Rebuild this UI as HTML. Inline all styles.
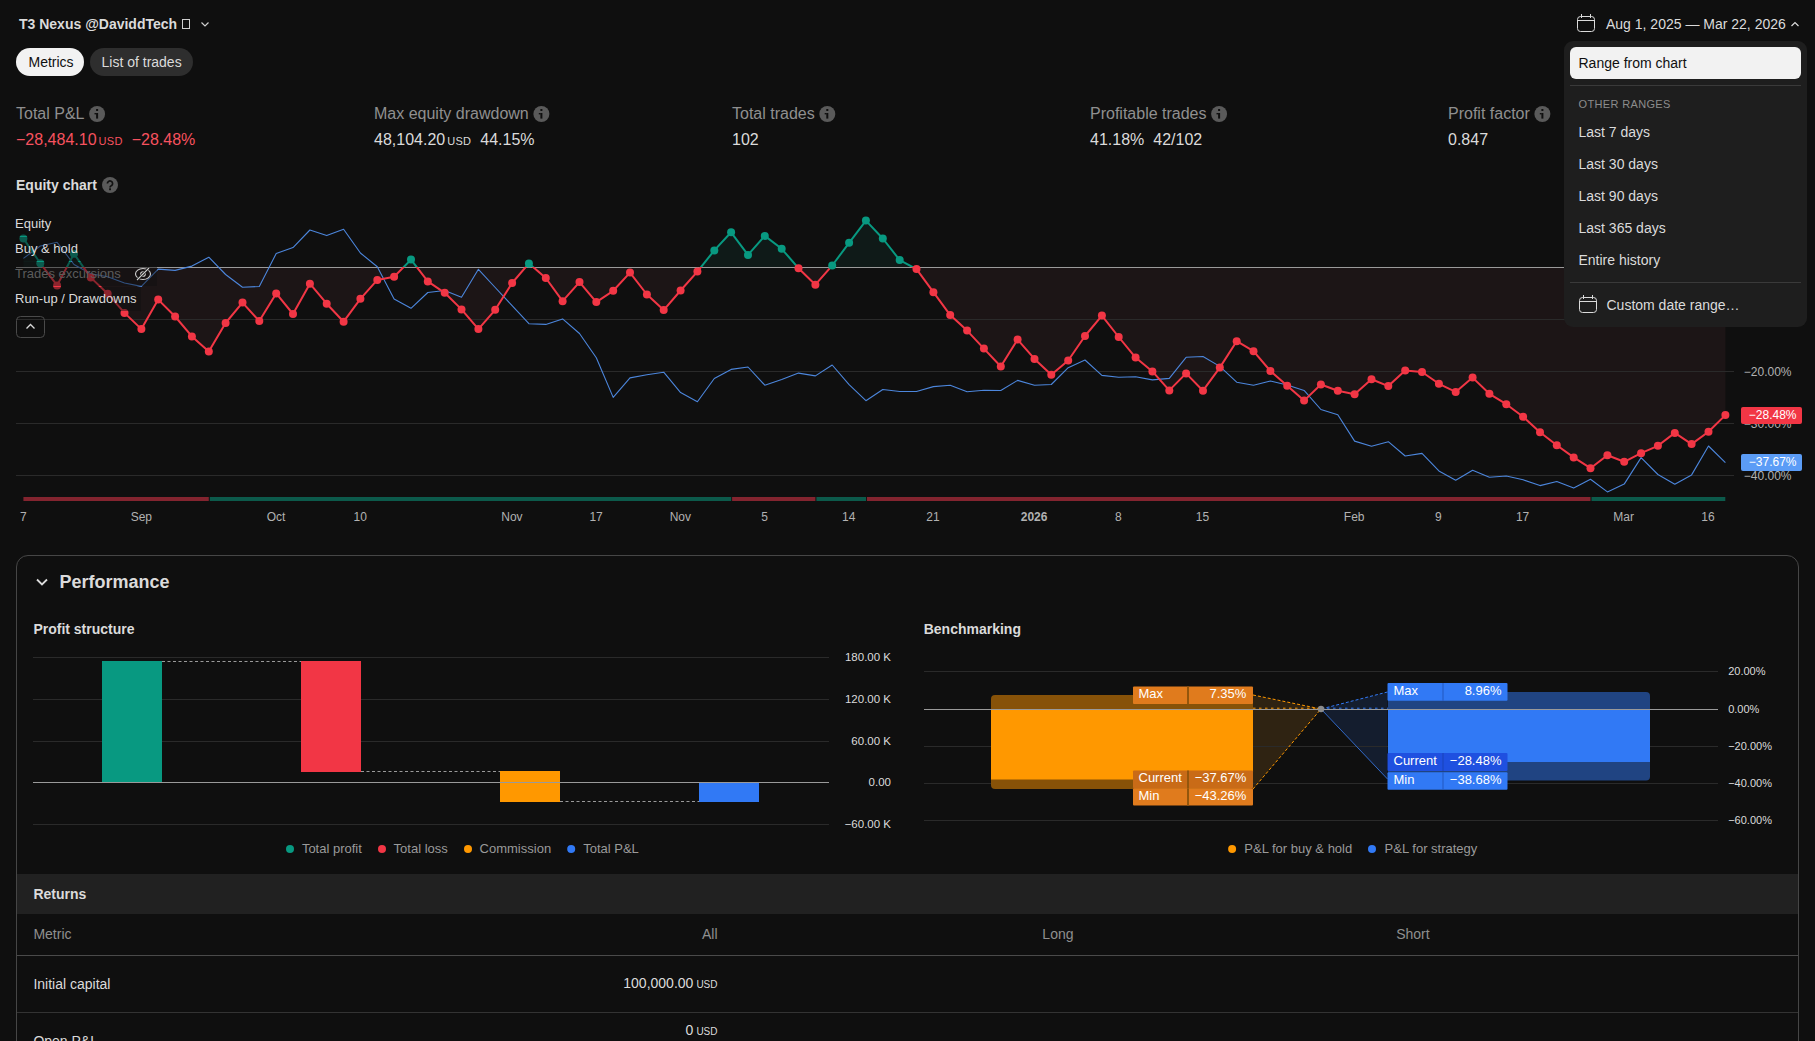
<!DOCTYPE html>
<html><head><meta charset="utf-8"><style>
html,body{margin:0;padding:0;background:#0f0f0f;width:1815px;height:1041px;overflow:hidden;font-family:"Liberation Sans", sans-serif}
.t{position:absolute;white-space:nowrap}
svg{position:absolute;left:0;top:0}
</style></head><body>
<div style="position:absolute;left:16px;top:555px;width:1781px;height:600px;border:1px solid #464646;border-radius:12px"></div><div style="position:absolute;left:17px;top:874px;width:1781px;height:40px;background:#212121"></div><div style="position:absolute;left:17px;top:955px;width:1781px;height:1px;background:#4a4a4a"></div><div style="position:absolute;left:17px;top:1012px;width:1781px;height:1px;background:#333333"></div>
<div style="position:absolute;left:16px;top:48px;width:68px;height:28px;border-radius:14px;background:#f2f2f2"></div><div style="position:absolute;left:90px;top:48px;width:103px;height:28px;border-radius:14px;background:#2e2e2e"></div>
<svg width="1815" height="1041" viewBox="0 0 1815 1041">
<rect x="182.5" y="19.5" width="7" height="9" fill="none" stroke="#cfcfcf" stroke-width="1"/><path d="M201.5 22.5 L205 26 L208.5 22.5" fill="none" stroke="#cfcfcf" stroke-width="1.2"/><rect x="1577.5" y="16.5" width="17" height="15" rx="3" fill="none" stroke="#dbdbdb" stroke-width="1"/><line x1="1577.5" y1="20.5" x2="1594.5" y2="20.5" stroke="#dbdbdb" stroke-width="1"/><line x1="1581.5" y1="14" x2="1581.5" y2="18" stroke="#dbdbdb" stroke-width="1"/><line x1="1590.5" y1="14" x2="1590.5" y2="18" stroke="#dbdbdb" stroke-width="1"/><path d="M1791.5 26 L1795 22.5 L1798.5 26" fill="none" stroke="#dbdbdb" stroke-width="1.2"/><circle cx="97.1" cy="114" r="8" fill="#5a5a5a"/><rect x="96.1" y="113" width="2" height="5.6" fill="#0f0f0f"/><rect x="94.5" y="113" width="1.8" height="1.4" fill="#0f0f0f"/><rect x="96.1" y="109" width="2" height="2" fill="#0f0f0f"/><circle cx="541.4" cy="114" r="8" fill="#5a5a5a"/><rect x="540.4" y="113" width="2" height="5.6" fill="#0f0f0f"/><rect x="538.8" y="113" width="1.8" height="1.4" fill="#0f0f0f"/><rect x="540.4" y="109" width="2" height="2" fill="#0f0f0f"/><circle cx="827.3" cy="114" r="8" fill="#5a5a5a"/><rect x="826.3" y="113" width="2" height="5.6" fill="#0f0f0f"/><rect x="824.7" y="113" width="1.8" height="1.4" fill="#0f0f0f"/><rect x="826.3" y="109" width="2" height="2" fill="#0f0f0f"/><circle cx="1219.1" cy="114" r="8" fill="#5a5a5a"/><rect x="1218.1" y="113" width="2" height="5.6" fill="#0f0f0f"/><rect x="1216.5" y="113" width="1.8" height="1.4" fill="#0f0f0f"/><rect x="1218.1" y="109" width="2" height="2" fill="#0f0f0f"/><circle cx="1542.4" cy="114" r="8" fill="#5a5a5a"/><rect x="1541.4" y="113" width="2" height="5.6" fill="#0f0f0f"/><rect x="1539.8" y="113" width="1.8" height="1.4" fill="#0f0f0f"/><rect x="1541.4" y="109" width="2" height="2" fill="#0f0f0f"/><circle cx="110" cy="185" r="8" fill="#5a5a5a"/><path d="M107.4 183.6 A2.6 2.6 0 1 1 111.6 185.6 Q110 186.4 110 187.6" stroke="#111" stroke-width="1.7" fill="none"/><rect x="109.1" y="188.3" width="1.9" height="1.9" fill="#111"/><defs><clipPath id="above"><rect x="0" y="0" width="1815" height="267"/></clipPath><clipPath id="below"><rect x="0" y="267" width="1815" height="400"/></clipPath></defs><path d="M23.4,267.0 L23.4,238.4 L40.3,263.3 L57.1,285.4 L74.0,253.8 L90.8,277.6 L107.7,293.7 L124.5,312.9 L141.4,329.1 L158.2,299.6 L175.1,316.5 L191.9,336.4 L208.8,351.4 L225.6,323.0 L242.5,302.6 L259.3,321.1 L276.2,293.4 L293.0,314.0 L309.9,283.7 L326.7,303.7 L343.6,321.7 L360.4,298.8 L377.3,279.9 L394.1,276.8 L411.0,259.6 L427.8,281.4 L444.7,292.8 L461.5,309.4 L478.4,329.1 L495.2,309.8 L512.1,283.0 L528.9,263.4 L545.8,278.0 L562.6,301.2 L579.5,282.1 L596.3,302.1 L613.2,290.8 L630.0,272.6 L646.9,294.5 L663.7,310.1 L680.6,290.5 L697.4,271.6 L714.3,250.4 L731.1,232.3 L748.0,254.9 L764.8,235.9 L781.7,248.8 L798.5,268.2 L815.4,284.7 L832.2,265.5 L849.1,242.8 L865.9,220.6 L882.8,238.5 L899.7,260.1 L916.5,269.1 L933.4,292.2 L950.2,315.1 L967.1,330.6 L983.9,348.6 L1000.8,366.5 L1017.6,339.6 L1034.5,358.9 L1051.3,374.7 L1068.2,360.5 L1085.0,336.0 L1101.9,315.6 L1118.7,337.0 L1135.6,357.6 L1152.4,371.4 L1169.3,390.4 L1186.1,373.4 L1203.0,390.7 L1219.8,367.6 L1236.7,341.2 L1253.5,351.2 L1270.4,371.0 L1287.2,385.7 L1304.1,400.6 L1320.9,384.5 L1337.8,390.8 L1354.6,394.2 L1371.5,379.2 L1388.3,386.1 L1405.2,370.4 L1422.0,372.0 L1438.9,383.8 L1455.7,391.9 L1472.6,377.6 L1489.4,393.8 L1506.3,404.2 L1523.1,416.8 L1540.0,432.2 L1556.8,445.2 L1573.7,457.4 L1590.5,468.2 L1607.4,455.2 L1624.2,461.8 L1641.1,453.2 L1657.9,445.8 L1674.8,432.9 L1691.6,444.1 L1708.5,431.8 L1725.4,415.1 L1725.4,267.0 Z" fill="#1c1516" clip-path="url(#below)"/><path d="M23.4,267.0 L23.4,238.4 L40.3,263.3 L57.1,285.4 L74.0,253.8 L90.8,277.6 L107.7,293.7 L124.5,312.9 L141.4,329.1 L158.2,299.6 L175.1,316.5 L191.9,336.4 L208.8,351.4 L225.6,323.0 L242.5,302.6 L259.3,321.1 L276.2,293.4 L293.0,314.0 L309.9,283.7 L326.7,303.7 L343.6,321.7 L360.4,298.8 L377.3,279.9 L394.1,276.8 L411.0,259.6 L427.8,281.4 L444.7,292.8 L461.5,309.4 L478.4,329.1 L495.2,309.8 L512.1,283.0 L528.9,263.4 L545.8,278.0 L562.6,301.2 L579.5,282.1 L596.3,302.1 L613.2,290.8 L630.0,272.6 L646.9,294.5 L663.7,310.1 L680.6,290.5 L697.4,271.6 L714.3,250.4 L731.1,232.3 L748.0,254.9 L764.8,235.9 L781.7,248.8 L798.5,268.2 L815.4,284.7 L832.2,265.5 L849.1,242.8 L865.9,220.6 L882.8,238.5 L899.7,260.1 L916.5,269.1 L933.4,292.2 L950.2,315.1 L967.1,330.6 L983.9,348.6 L1000.8,366.5 L1017.6,339.6 L1034.5,358.9 L1051.3,374.7 L1068.2,360.5 L1085.0,336.0 L1101.9,315.6 L1118.7,337.0 L1135.6,357.6 L1152.4,371.4 L1169.3,390.4 L1186.1,373.4 L1203.0,390.7 L1219.8,367.6 L1236.7,341.2 L1253.5,351.2 L1270.4,371.0 L1287.2,385.7 L1304.1,400.6 L1320.9,384.5 L1337.8,390.8 L1354.6,394.2 L1371.5,379.2 L1388.3,386.1 L1405.2,370.4 L1422.0,372.0 L1438.9,383.8 L1455.7,391.9 L1472.6,377.6 L1489.4,393.8 L1506.3,404.2 L1523.1,416.8 L1540.0,432.2 L1556.8,445.2 L1573.7,457.4 L1590.5,468.2 L1607.4,455.2 L1624.2,461.8 L1641.1,453.2 L1657.9,445.8 L1674.8,432.9 L1691.6,444.1 L1708.5,431.8 L1725.4,415.1 L1725.4,267.0 Z" fill="#0f1a18" clip-path="url(#above)"/><line x1="16" y1="319.5" x2="1734" y2="319.5" stroke="#2a2a2a" stroke-width="1"/><line x1="16" y1="371.5" x2="1734" y2="371.5" stroke="#2a2a2a" stroke-width="1"/><line x1="16" y1="423.5" x2="1734" y2="423.5" stroke="#2a2a2a" stroke-width="1"/><line x1="16" y1="475.5" x2="1734" y2="475.5" stroke="#2a2a2a" stroke-width="1"/><line x1="16" y1="267.5" x2="1734" y2="267.5" stroke="#9a9a9a" stroke-width="1"/><polyline points="23.4,258.4 40.3,246.0 57.1,242.3 74.0,264.5 90.8,273.8 107.7,276.8 124.5,283.0 141.4,286.4 158.2,269.1 175.1,270.4 191.9,266.1 208.8,257.2 225.6,274.5 242.5,287.3 259.3,286.5 276.2,253.5 293.0,247.6 309.9,230.0 326.7,235.6 343.6,229.2 360.4,253.0 377.3,266.8 394.1,299.1 411.0,308.3 427.8,292.5 444.7,290.5 461.5,297.3 478.4,269.3 495.2,287.5 512.1,305.6 528.9,323.7 545.8,324.4 562.6,318.9 579.5,333.5 596.3,357.8 613.2,397.4 630.0,377.9 646.9,374.8 663.7,372.2 680.6,392.6 697.4,401.7 714.3,378.5 731.1,369.4 748.0,367.0 764.8,385.2 781.7,379.5 798.5,373.1 815.4,375.9 832.2,365.0 849.1,384.6 865.9,400.7 882.8,389.5 899.7,391.5 916.5,391.5 933.4,386.6 950.2,385.3 967.1,391.8 983.9,390.2 1000.8,390.5 1017.6,380.4 1034.5,385.3 1051.3,384.5 1068.2,367.7 1085.0,360.0 1101.9,375.4 1118.7,377.2 1135.6,376.8 1152.4,379.9 1169.3,378.4 1186.1,357.3 1203.0,356.5 1219.8,366.4 1236.7,382.2 1253.5,385.3 1270.4,381.0 1287.2,385.0 1304.1,390.4 1320.9,409.5 1337.8,414.8 1354.6,441.1 1371.5,446.3 1388.3,441.7 1405.2,456.0 1422.0,453.4 1438.9,470.9 1455.7,480.3 1472.6,470.3 1489.4,477.2 1506.3,476.0 1523.1,479.8 1540.0,485.6 1556.8,481.5 1573.7,488.1 1590.5,479.3 1607.4,491.9 1624.2,484.1 1641.1,457.6 1657.9,474.5 1674.8,484.3 1691.6,474.9 1708.5,446.0 1725.4,462.7" fill="none" stroke="#4c86dc" stroke-width="1.1" stroke-linejoin="round"/><polyline points="23.4,238.4 40.3,263.3 57.1,285.4 74.0,253.8 90.8,277.6 107.7,293.7 124.5,312.9 141.4,329.1 158.2,299.6 175.1,316.5 191.9,336.4 208.8,351.4 225.6,323.0 242.5,302.6 259.3,321.1 276.2,293.4 293.0,314.0 309.9,283.7 326.7,303.7 343.6,321.7 360.4,298.8 377.3,279.9 394.1,276.8 411.0,259.6 427.8,281.4 444.7,292.8 461.5,309.4 478.4,329.1 495.2,309.8 512.1,283.0 528.9,263.4 545.8,278.0 562.6,301.2 579.5,282.1 596.3,302.1 613.2,290.8 630.0,272.6 646.9,294.5 663.7,310.1 680.6,290.5 697.4,271.6 714.3,250.4 731.1,232.3 748.0,254.9 764.8,235.9 781.7,248.8 798.5,268.2 815.4,284.7 832.2,265.5 849.1,242.8 865.9,220.6 882.8,238.5 899.7,260.1 916.5,269.1 933.4,292.2 950.2,315.1 967.1,330.6 983.9,348.6 1000.8,366.5 1017.6,339.6 1034.5,358.9 1051.3,374.7 1068.2,360.5 1085.0,336.0 1101.9,315.6 1118.7,337.0 1135.6,357.6 1152.4,371.4 1169.3,390.4 1186.1,373.4 1203.0,390.7 1219.8,367.6 1236.7,341.2 1253.5,351.2 1270.4,371.0 1287.2,385.7 1304.1,400.6 1320.9,384.5 1337.8,390.8 1354.6,394.2 1371.5,379.2 1388.3,386.1 1405.2,370.4 1422.0,372.0 1438.9,383.8 1455.7,391.9 1472.6,377.6 1489.4,393.8 1506.3,404.2 1523.1,416.8 1540.0,432.2 1556.8,445.2 1573.7,457.4 1590.5,468.2 1607.4,455.2 1624.2,461.8 1641.1,453.2 1657.9,445.8 1674.8,432.9 1691.6,444.1 1708.5,431.8 1725.4,415.1" fill="none" stroke="#f23645" stroke-width="2" clip-path="url(#below)" stroke-linejoin="round"/><polyline points="23.4,238.4 40.3,263.3 57.1,285.4 74.0,253.8 90.8,277.6 107.7,293.7 124.5,312.9 141.4,329.1 158.2,299.6 175.1,316.5 191.9,336.4 208.8,351.4 225.6,323.0 242.5,302.6 259.3,321.1 276.2,293.4 293.0,314.0 309.9,283.7 326.7,303.7 343.6,321.7 360.4,298.8 377.3,279.9 394.1,276.8 411.0,259.6 427.8,281.4 444.7,292.8 461.5,309.4 478.4,329.1 495.2,309.8 512.1,283.0 528.9,263.4 545.8,278.0 562.6,301.2 579.5,282.1 596.3,302.1 613.2,290.8 630.0,272.6 646.9,294.5 663.7,310.1 680.6,290.5 697.4,271.6 714.3,250.4 731.1,232.3 748.0,254.9 764.8,235.9 781.7,248.8 798.5,268.2 815.4,284.7 832.2,265.5 849.1,242.8 865.9,220.6 882.8,238.5 899.7,260.1 916.5,269.1 933.4,292.2 950.2,315.1 967.1,330.6 983.9,348.6 1000.8,366.5 1017.6,339.6 1034.5,358.9 1051.3,374.7 1068.2,360.5 1085.0,336.0 1101.9,315.6 1118.7,337.0 1135.6,357.6 1152.4,371.4 1169.3,390.4 1186.1,373.4 1203.0,390.7 1219.8,367.6 1236.7,341.2 1253.5,351.2 1270.4,371.0 1287.2,385.7 1304.1,400.6 1320.9,384.5 1337.8,390.8 1354.6,394.2 1371.5,379.2 1388.3,386.1 1405.2,370.4 1422.0,372.0 1438.9,383.8 1455.7,391.9 1472.6,377.6 1489.4,393.8 1506.3,404.2 1523.1,416.8 1540.0,432.2 1556.8,445.2 1573.7,457.4 1590.5,468.2 1607.4,455.2 1624.2,461.8 1641.1,453.2 1657.9,445.8 1674.8,432.9 1691.6,444.1 1708.5,431.8 1725.4,415.1" fill="none" stroke="#089981" stroke-width="2" clip-path="url(#above)" stroke-linejoin="round"/><circle cx="23.4" cy="238.4" r="4" fill="#089981"/><circle cx="40.3" cy="263.3" r="4" fill="#089981"/><circle cx="57.1" cy="285.4" r="4" fill="#f23645"/><circle cx="74.0" cy="253.8" r="4" fill="#089981"/><circle cx="90.8" cy="277.6" r="4" fill="#f23645"/><circle cx="107.7" cy="293.7" r="4" fill="#f23645"/><circle cx="124.5" cy="312.9" r="4" fill="#f23645"/><circle cx="141.4" cy="329.1" r="4" fill="#f23645"/><circle cx="158.2" cy="299.6" r="4" fill="#f23645"/><circle cx="175.1" cy="316.5" r="4" fill="#f23645"/><circle cx="191.9" cy="336.4" r="4" fill="#f23645"/><circle cx="208.8" cy="351.4" r="4" fill="#f23645"/><circle cx="225.6" cy="323.0" r="4" fill="#f23645"/><circle cx="242.5" cy="302.6" r="4" fill="#f23645"/><circle cx="259.3" cy="321.1" r="4" fill="#f23645"/><circle cx="276.2" cy="293.4" r="4" fill="#f23645"/><circle cx="293.0" cy="314.0" r="4" fill="#f23645"/><circle cx="309.9" cy="283.7" r="4" fill="#f23645"/><circle cx="326.7" cy="303.7" r="4" fill="#f23645"/><circle cx="343.6" cy="321.7" r="4" fill="#f23645"/><circle cx="360.4" cy="298.8" r="4" fill="#f23645"/><circle cx="377.3" cy="279.9" r="4" fill="#f23645"/><circle cx="394.1" cy="276.8" r="4" fill="#f23645"/><circle cx="411.0" cy="259.6" r="4" fill="#089981"/><circle cx="427.8" cy="281.4" r="4" fill="#f23645"/><circle cx="444.7" cy="292.8" r="4" fill="#f23645"/><circle cx="461.5" cy="309.4" r="4" fill="#f23645"/><circle cx="478.4" cy="329.1" r="4" fill="#f23645"/><circle cx="495.2" cy="309.8" r="4" fill="#f23645"/><circle cx="512.1" cy="283.0" r="4" fill="#f23645"/><circle cx="528.9" cy="263.4" r="4" fill="#089981"/><circle cx="545.8" cy="278.0" r="4" fill="#f23645"/><circle cx="562.6" cy="301.2" r="4" fill="#f23645"/><circle cx="579.5" cy="282.1" r="4" fill="#f23645"/><circle cx="596.3" cy="302.1" r="4" fill="#f23645"/><circle cx="613.2" cy="290.8" r="4" fill="#f23645"/><circle cx="630.0" cy="272.6" r="4" fill="#f23645"/><circle cx="646.9" cy="294.5" r="4" fill="#f23645"/><circle cx="663.7" cy="310.1" r="4" fill="#f23645"/><circle cx="680.6" cy="290.5" r="4" fill="#f23645"/><circle cx="697.4" cy="271.6" r="4" fill="#f23645"/><circle cx="714.3" cy="250.4" r="4" fill="#089981"/><circle cx="731.1" cy="232.3" r="4" fill="#089981"/><circle cx="748.0" cy="254.9" r="4" fill="#089981"/><circle cx="764.8" cy="235.9" r="4" fill="#089981"/><circle cx="781.7" cy="248.8" r="4" fill="#089981"/><circle cx="798.5" cy="268.2" r="4" fill="#f23645"/><circle cx="815.4" cy="284.7" r="4" fill="#f23645"/><circle cx="832.2" cy="265.5" r="4" fill="#089981"/><circle cx="849.1" cy="242.8" r="4" fill="#089981"/><circle cx="865.9" cy="220.6" r="4" fill="#089981"/><circle cx="882.8" cy="238.5" r="4" fill="#089981"/><circle cx="899.7" cy="260.1" r="4" fill="#089981"/><circle cx="916.5" cy="269.1" r="4" fill="#f23645"/><circle cx="933.4" cy="292.2" r="4" fill="#f23645"/><circle cx="950.2" cy="315.1" r="4" fill="#f23645"/><circle cx="967.1" cy="330.6" r="4" fill="#f23645"/><circle cx="983.9" cy="348.6" r="4" fill="#f23645"/><circle cx="1000.8" cy="366.5" r="4" fill="#f23645"/><circle cx="1017.6" cy="339.6" r="4" fill="#f23645"/><circle cx="1034.5" cy="358.9" r="4" fill="#f23645"/><circle cx="1051.3" cy="374.7" r="4" fill="#f23645"/><circle cx="1068.2" cy="360.5" r="4" fill="#f23645"/><circle cx="1085.0" cy="336.0" r="4" fill="#f23645"/><circle cx="1101.9" cy="315.6" r="4" fill="#f23645"/><circle cx="1118.7" cy="337.0" r="4" fill="#f23645"/><circle cx="1135.6" cy="357.6" r="4" fill="#f23645"/><circle cx="1152.4" cy="371.4" r="4" fill="#f23645"/><circle cx="1169.3" cy="390.4" r="4" fill="#f23645"/><circle cx="1186.1" cy="373.4" r="4" fill="#f23645"/><circle cx="1203.0" cy="390.7" r="4" fill="#f23645"/><circle cx="1219.8" cy="367.6" r="4" fill="#f23645"/><circle cx="1236.7" cy="341.2" r="4" fill="#f23645"/><circle cx="1253.5" cy="351.2" r="4" fill="#f23645"/><circle cx="1270.4" cy="371.0" r="4" fill="#f23645"/><circle cx="1287.2" cy="385.7" r="4" fill="#f23645"/><circle cx="1304.1" cy="400.6" r="4" fill="#f23645"/><circle cx="1320.9" cy="384.5" r="4" fill="#f23645"/><circle cx="1337.8" cy="390.8" r="4" fill="#f23645"/><circle cx="1354.6" cy="394.2" r="4" fill="#f23645"/><circle cx="1371.5" cy="379.2" r="4" fill="#f23645"/><circle cx="1388.3" cy="386.1" r="4" fill="#f23645"/><circle cx="1405.2" cy="370.4" r="4" fill="#f23645"/><circle cx="1422.0" cy="372.0" r="4" fill="#f23645"/><circle cx="1438.9" cy="383.8" r="4" fill="#f23645"/><circle cx="1455.7" cy="391.9" r="4" fill="#f23645"/><circle cx="1472.6" cy="377.6" r="4" fill="#f23645"/><circle cx="1489.4" cy="393.8" r="4" fill="#f23645"/><circle cx="1506.3" cy="404.2" r="4" fill="#f23645"/><circle cx="1523.1" cy="416.8" r="4" fill="#f23645"/><circle cx="1540.0" cy="432.2" r="4" fill="#f23645"/><circle cx="1556.8" cy="445.2" r="4" fill="#f23645"/><circle cx="1573.7" cy="457.4" r="4" fill="#f23645"/><circle cx="1590.5" cy="468.2" r="4" fill="#f23645"/><circle cx="1607.4" cy="455.2" r="4" fill="#f23645"/><circle cx="1624.2" cy="461.8" r="4" fill="#f23645"/><circle cx="1641.1" cy="453.2" r="4" fill="#f23645"/><circle cx="1657.9" cy="445.8" r="4" fill="#f23645"/><circle cx="1674.8" cy="432.9" r="4" fill="#f23645"/><circle cx="1691.6" cy="444.1" r="4" fill="#f23645"/><circle cx="1708.5" cy="431.8" r="4" fill="#f23645"/><circle cx="1725.4" cy="415.1" r="4" fill="#f23645"/><rect x="23.4" y="497" width="185.4" height="4" fill="#83242f"/><rect x="209.8" y="497" width="521.4" height="4" fill="#0c5a4b"/><rect x="732.1" y="497" width="83.3" height="4" fill="#83242f"/><rect x="816.4" y="497" width="49.6" height="4" fill="#0c5a4b"/><rect x="866.9" y="497" width="723.6" height="4" fill="#83242f"/><rect x="1591.5" y="497" width="133.8" height="4" fill="#0c5a4b"/><path d="M37 579.5 L42 584.5 L47 579.5" fill="none" stroke="#dbdbdb" stroke-width="1.8"/><line x1="33" y1="657.5" x2="829" y2="657.5" stroke="#2a2a2a" stroke-width="1"/><line x1="33" y1="699.5" x2="829" y2="699.5" stroke="#2a2a2a" stroke-width="1"/><line x1="33" y1="741.5" x2="829" y2="741.5" stroke="#2a2a2a" stroke-width="1"/><line x1="33" y1="824.5" x2="829" y2="824.5" stroke="#2a2a2a" stroke-width="1"/><rect x="102" y="661" width="60" height="121.5" fill="#089981"/><rect x="301" y="661" width="60" height="111" fill="#f23645"/><rect x="500" y="771" width="60" height="31" fill="#ff9800"/><rect x="699" y="782.5" width="60" height="19.5" fill="#3179f5"/><line x1="33" y1="782.5" x2="829" y2="782.5" stroke="#9a9a9a" stroke-width="1"/><line x1="162" y1="661.5" x2="301" y2="661.5" stroke="#9a9a9a" stroke-width="1" stroke-dasharray="3 2.5"/><line x1="361" y1="771.5" x2="500" y2="771.5" stroke="#9a9a9a" stroke-width="1" stroke-dasharray="3 2.5"/><line x1="560" y1="801.5" x2="699" y2="801.5" stroke="#9a9a9a" stroke-width="1" stroke-dasharray="3 2.5"/><circle cx="290" cy="849" r="4" fill="#089981"/><circle cx="382" cy="849" r="4" fill="#f23645"/><circle cx="468" cy="849" r="4" fill="#ff9800"/><circle cx="571.2" cy="849" r="4" fill="#3179f5"/><path d="M1253,695 L1321,709 L1253,789 Z" fill="#2f2312"/><path d="M1387.5,692 L1321,709 L1387.5,779.5 Z" fill="#141d2e"/><line x1="924" y1="671.5" x2="1718" y2="671.5" stroke="#2a2a2a" stroke-width="1"/><line x1="924" y1="746.5" x2="1718" y2="746.5" stroke="#2a2a2a" stroke-width="1"/><line x1="924" y1="783.5" x2="1718" y2="783.5" stroke="#2a2a2a" stroke-width="1"/><line x1="924" y1="820.5" x2="1718" y2="820.5" stroke="#2a2a2a" stroke-width="1"/><rect x="991" y="695" width="262" height="94" rx="4" fill="#875208"/><rect x="991" y="709" width="262" height="70.5" fill="#ff9800"/><line x1="1253" y1="695" x2="1321" y2="709" stroke="#ff9800" stroke-width="1" stroke-dasharray="3 2"/><line x1="1253" y1="789" x2="1321" y2="709" stroke="#ff9800" stroke-width="1" stroke-dasharray="3 2"/><rect x="1388" y="692" width="262" height="88.5" rx="4" fill="#204482"/><rect x="1388" y="709" width="262" height="53" fill="#3179f5"/><line x1="1387.5" y1="692" x2="1321" y2="709" stroke="#3179f5" stroke-width="1" stroke-dasharray="3 2"/><line x1="1387.5" y1="779" x2="1321" y2="709" stroke="#3a7ef0" stroke-width="0.8"/><line x1="924" y1="709.5" x2="1718" y2="709.5" stroke="#9a9a9a" stroke-width="1"/><line x1="1253" y1="708.2" x2="1321" y2="708.2" stroke="#ff9800" stroke-width="1" stroke-dasharray="2.5 3.5"/><line x1="1321" y1="708.2" x2="1388" y2="708.2" stroke="#3179f5" stroke-width="1" stroke-dasharray="2.5 3.5"/><circle cx="1321" cy="709" r="3.2" fill="#8c8c8c"/><rect x="1133" y="686.5" width="120" height="17.5" rx="1" fill="#e07b1d"/><rect x="1187" y="686.5" width="2" height="17.5" fill="#93560c"/><rect x="1133" y="770.5" width="120" height="17.8" rx="1" fill="#c96b17"/><rect x="1187" y="770.5" width="2" height="17.8" fill="#93560c"/><rect x="1133" y="788.3" width="120" height="17.3" rx="1" fill="#e07b1d"/><rect x="1187" y="788.3" width="2" height="17.3" fill="#93560c"/><rect x="1387.5" y="683" width="120" height="17.8" rx="1" fill="#3179f5"/><rect x="1442.5" y="683" width="1" height="17.8" fill="#2358c0"/><rect x="1387.5" y="753" width="120" height="18" rx="1" fill="#1f50e0"/><rect x="1442.5" y="753" width="1" height="18" fill="#1a43b8"/><rect x="1387.5" y="772.2" width="120" height="17.6" rx="1" fill="#3179f5"/><rect x="1442.5" y="772.2" width="1" height="17.6" fill="#2358c0"/><circle cx="1232.1" cy="849" r="4" fill="#ff9800"/><circle cx="1372" cy="849" r="4" fill="#3179f5"/>
</svg>
<div style="position:absolute;left:11px;top:212px;width:48px;height:24px;background:rgba(15,15,15,0.45)"></div><div style="position:absolute;left:11px;top:237px;width:73px;height:24px;background:rgba(15,15,15,0.45)"></div><div style="position:absolute;left:11px;top:262px;width:146px;height:24px;background:rgba(15,15,15,0.45)"></div><div style="position:absolute;left:11px;top:287px;width:130px;height:24px;background:rgba(15,15,15,0.45)"></div>
<svg width="1815" height="1041" viewBox="0 0 1815 1041"><ellipse cx="143" cy="274" rx="7.5" ry="5.5" fill="none" stroke="#cfcfcf" stroke-width="1.1"/><circle cx="143" cy="274" r="2.3" fill="none" stroke="#cfcfcf" stroke-width="1.1"/><line x1="137" y1="280" x2="149" y2="268" stroke="#0f0f0f" stroke-width="2.5"/><line x1="137" y1="280" x2="149" y2="268" stroke="#cfcfcf" stroke-width="1.1"/><rect x="16.5" y="316.5" width="28" height="21" rx="4" fill="none" stroke="#4a4a4a" stroke-width="1"/><path d="M26.5 328.5 L30.5 324.5 L34.5 328.5" fill="none" stroke="#dbdbdb" stroke-width="1.3"/></svg>
<div class="t" style="left:19px;top:17.25px;font-size:14px;line-height:14px;font-weight:700;color:#dbdbdb;">T3 Nexus @DaviddTech</div><div class="t" style="left:28.5px;top:54.85px;font-size:14px;line-height:14px;font-weight:400;color:#0f0f0f;">Metrics</div><div class="t" style="left:101.5px;top:54.85px;font-size:14px;line-height:14px;font-weight:400;color:#dbdbdb;">List of trades</div><div class="t" style="left:1606px;top:17.25px;font-size:14px;line-height:14px;font-weight:400;color:#dbdbdb;">Aug 1, 2025 — Mar 22, 2026</div><div class="t" style="left:16px;top:105.76px;font-size:16px;line-height:16px;font-weight:400;color:#8f8f8f;">Total P&amp;L</div><div class="t" style="left:374px;top:105.76px;font-size:16px;line-height:16px;font-weight:400;color:#8f8f8f;">Max equity drawdown</div><div class="t" style="left:732px;top:105.76px;font-size:16px;line-height:16px;font-weight:400;color:#8f8f8f;">Total trades</div><div class="t" style="left:1090px;top:105.76px;font-size:16px;line-height:16px;font-weight:400;color:#8f8f8f;">Profitable trades</div><div class="t" style="left:1448px;top:105.76px;font-size:16px;line-height:16px;font-weight:400;color:#8f8f8f;">Profit factor</div><div class="t" style="left:16px;top:132.46px;font-size:16px;line-height:16px;font-weight:400;color:#f7525f;">−28,484.10<span style="font-size:11px;margin-left:2px;letter-spacing:0.3px">USD</span><span style="margin-left:9px">−28.48%</span></div><div class="t" style="left:374px;top:132.46px;font-size:16px;line-height:16px;font-weight:400;color:#dbdbdb;">48,104.20<span style="font-size:11px;margin-left:2px;letter-spacing:0.3px">USD</span><span style="margin-left:9px">44.15%</span></div><div class="t" style="left:732px;top:132.46px;font-size:16px;line-height:16px;font-weight:400;color:#dbdbdb;">102</div><div class="t" style="left:1090px;top:132.46px;font-size:16px;line-height:16px;font-weight:400;color:#dbdbdb;">41.18%<span style="margin-left:9px">42/102</span></div><div class="t" style="left:1448px;top:132.46px;font-size:16px;line-height:16px;font-weight:400;color:#dbdbdb;">0.847</div><div class="t" style="left:16px;top:178.35px;font-size:14px;line-height:14px;font-weight:700;color:#dbdbdb;">Equity chart</div><div class="t" style="left:-276.6px;width:600px;text-align:center;top:510.84px;font-size:12px;line-height:12px;font-weight:400;color:#b2b2b2;">7</div><div class="t" style="left:-158.685px;width:600px;text-align:center;top:510.84px;font-size:12px;line-height:12px;font-weight:400;color:#b2b2b2;">Sep</div><div class="t" style="left:-23.92500000000001px;width:600px;text-align:center;top:510.84px;font-size:12px;line-height:12px;font-weight:400;color:#b2b2b2;">Oct</div><div class="t" style="left:60.299999999999955px;width:600px;text-align:center;top:510.84px;font-size:12px;line-height:12px;font-weight:400;color:#b2b2b2;">10</div><div class="t" style="left:211.90499999999997px;width:600px;text-align:center;top:510.84px;font-size:12px;line-height:12px;font-weight:400;color:#b2b2b2;">Nov</div><div class="t" style="left:296.13px;width:600px;text-align:center;top:510.84px;font-size:12px;line-height:12px;font-weight:400;color:#b2b2b2;">17</div><div class="t" style="left:380.3549999999999px;width:600px;text-align:center;top:510.84px;font-size:12px;line-height:12px;font-weight:400;color:#b2b2b2;">Nov</div><div class="t" style="left:464.5799999999999px;width:600px;text-align:center;top:510.84px;font-size:12px;line-height:12px;font-weight:400;color:#b2b2b2;">5</div><div class="t" style="left:548.805px;width:600px;text-align:center;top:510.84px;font-size:12px;line-height:12px;font-weight:400;color:#b2b2b2;">14</div><div class="t" style="left:633.03px;width:600px;text-align:center;top:510.84px;font-size:12px;line-height:12px;font-weight:400;color:#b2b2b2;">21</div><div class="t" style="left:734.1000000000001px;width:600px;text-align:center;top:510.84px;font-size:12px;line-height:12px;font-weight:700;color:#b2b2b2;">2026</div><div class="t" style="left:818.325px;width:600px;text-align:center;top:510.84px;font-size:12px;line-height:12px;font-weight:400;color:#b2b2b2;">8</div><div class="t" style="left:902.55px;width:600px;text-align:center;top:510.84px;font-size:12px;line-height:12px;font-weight:400;color:#b2b2b2;">15</div><div class="t" style="left:1054.155px;width:600px;text-align:center;top:510.84px;font-size:12px;line-height:12px;font-weight:400;color:#b2b2b2;">Feb</div><div class="t" style="left:1138.38px;width:600px;text-align:center;top:510.84px;font-size:12px;line-height:12px;font-weight:400;color:#b2b2b2;">9</div><div class="t" style="left:1222.605px;width:600px;text-align:center;top:510.84px;font-size:12px;line-height:12px;font-weight:400;color:#b2b2b2;">17</div><div class="t" style="left:1323.675px;width:600px;text-align:center;top:510.84px;font-size:12px;line-height:12px;font-weight:400;color:#b2b2b2;">Mar</div><div class="t" style="left:1407.9px;width:600px;text-align:center;top:510.84px;font-size:12px;line-height:12px;font-weight:400;color:#b2b2b2;">16</div><div class="t" style="right:23.5px;top:366.04px;font-size:12px;line-height:12px;font-weight:400;color:#b2b2b2;">−20.00%</div><div class="t" style="right:23.5px;top:418.04px;font-size:12px;line-height:12px;font-weight:400;color:#b2b2b2;">−30.00%</div><div class="t" style="right:23.5px;top:470.04px;font-size:12px;line-height:12px;font-weight:400;color:#b2b2b2;">−40.00%</div><div class="t" style="right:23.5px;top:314.04px;font-size:12px;line-height:12px;font-weight:400;color:#b2b2b2;">−10.00%</div><div class="t" style="right:23.5px;top:262.04px;font-size:12px;line-height:12px;font-weight:400;color:#b2b2b2;">0.00%</div><div class="t" style="right:23.5px;top:210.04px;font-size:12px;line-height:12px;font-weight:400;color:#b2b2b2;">10.00%</div><div class="t" style="left:15px;top:216.50px;font-size:13px;line-height:13px;font-weight:400;color:#dbdbdb;">Equity</div><div class="t" style="left:15px;top:241.50px;font-size:13px;line-height:13px;font-weight:400;color:#dbdbdb;">Buy &amp; hold</div><div class="t" style="left:15px;top:266.50px;font-size:13px;line-height:13px;font-weight:400;color:#5c5c5c;">Trades excursions</div><div class="t" style="left:15px;top:291.50px;font-size:13px;line-height:13px;font-weight:400;color:#dbdbdb;">Run-up / Drawdowns</div><div class="t" style="left:59.4px;top:572.66px;font-size:18px;line-height:18px;font-weight:700;color:#dbdbdb;">Performance</div><div class="t" style="left:33.4px;top:621.95px;font-size:14px;line-height:14px;font-weight:700;color:#dbdbdb;">Profit structure</div><div class="t" style="left:923.7px;top:622.15px;font-size:14px;line-height:14px;font-weight:700;color:#dbdbdb;">Benchmarking</div><div class="t" style="right:924px;top:652.47px;font-size:11.5px;line-height:11.5px;font-weight:400;color:#dbdbdb;">180.00 K</div><div class="t" style="right:924px;top:694.47px;font-size:11.5px;line-height:11.5px;font-weight:400;color:#dbdbdb;">120.00 K</div><div class="t" style="right:924px;top:736.47px;font-size:11.5px;line-height:11.5px;font-weight:400;color:#dbdbdb;">60.00 K</div><div class="t" style="right:924px;top:819.47px;font-size:11.5px;line-height:11.5px;font-weight:400;color:#dbdbdb;">−60.00 K</div><div class="t" style="right:924px;top:777.47px;font-size:11.5px;line-height:11.5px;font-weight:400;color:#dbdbdb;">0.00</div><div class="t" style="left:301.9px;top:842.00px;font-size:13px;line-height:13px;font-weight:400;color:#9a9a9a;">Total profit</div><div class="t" style="left:393.6px;top:842.00px;font-size:13px;line-height:13px;font-weight:400;color:#9a9a9a;">Total loss</div><div class="t" style="left:479.6px;top:842.00px;font-size:13px;line-height:13px;font-weight:400;color:#9a9a9a;">Commission</div><div class="t" style="left:583.2px;top:842.00px;font-size:13px;line-height:13px;font-weight:400;color:#9a9a9a;">Total P&amp;L</div><div class="t" style="left:1728.2px;top:665.99px;font-size:11px;line-height:11px;font-weight:400;color:#dbdbdb;">20.00%</div><div class="t" style="left:1728.2px;top:740.99px;font-size:11px;line-height:11px;font-weight:400;color:#dbdbdb;">−20.00%</div><div class="t" style="left:1728.2px;top:777.99px;font-size:11px;line-height:11px;font-weight:400;color:#dbdbdb;">−40.00%</div><div class="t" style="left:1728.2px;top:814.99px;font-size:11px;line-height:11px;font-weight:400;color:#dbdbdb;">−60.00%</div><div class="t" style="left:1728.2px;top:704.19px;font-size:11px;line-height:11px;font-weight:400;color:#dbdbdb;">0.00%</div><div class="t" style="left:1138.5px;top:687.20px;font-size:13px;line-height:13px;font-weight:400;color:#ffffff;">Max</div><div class="t" style="right:568.7px;top:687.20px;font-size:13px;line-height:13px;font-weight:400;color:#ffffff;">7.35%</div><div class="t" style="left:1138.5px;top:771.20px;font-size:13px;line-height:13px;font-weight:400;color:#ffffff;">Current</div><div class="t" style="right:568.7px;top:771.20px;font-size:13px;line-height:13px;font-weight:400;color:#ffffff;">−37.67%</div><div class="t" style="left:1138.5px;top:789.00px;font-size:13px;line-height:13px;font-weight:400;color:#ffffff;">Min</div><div class="t" style="right:568.7px;top:789.00px;font-size:13px;line-height:13px;font-weight:400;color:#ffffff;">−43.26%</div><div class="t" style="left:1393.5px;top:683.70px;font-size:13px;line-height:13px;font-weight:400;color:#ffffff;">Max</div><div class="t" style="right:313.5px;top:683.70px;font-size:13px;line-height:13px;font-weight:400;color:#ffffff;">8.96%</div><div class="t" style="left:1393.5px;top:753.70px;font-size:13px;line-height:13px;font-weight:400;color:#ffffff;">Current</div><div class="t" style="right:313.5px;top:753.70px;font-size:13px;line-height:13px;font-weight:400;color:#ffffff;">−28.48%</div><div class="t" style="left:1393.5px;top:772.90px;font-size:13px;line-height:13px;font-weight:400;color:#ffffff;">Min</div><div class="t" style="right:313.5px;top:772.90px;font-size:13px;line-height:13px;font-weight:400;color:#ffffff;">−38.68%</div><div class="t" style="left:1244.3px;top:842.00px;font-size:13px;line-height:13px;font-weight:400;color:#9a9a9a;">P&amp;L for buy &amp; hold</div><div class="t" style="left:1384.6px;top:842.00px;font-size:13px;line-height:13px;font-weight:400;color:#9a9a9a;">P&amp;L for strategy</div><div class="t" style="left:33.4px;top:887.25px;font-size:14px;line-height:14px;font-weight:700;color:#dbdbdb;">Returns</div><div class="t" style="left:33.4px;top:927.25px;font-size:14px;line-height:14px;font-weight:400;color:#8f8f8f;">Metric</div><div class="t" style="right:1097.5px;top:927.25px;font-size:14px;line-height:14px;font-weight:400;color:#8f8f8f;">All</div><div class="t" style="right:741.5px;top:927.25px;font-size:14px;line-height:14px;font-weight:400;color:#8f8f8f;">Long</div><div class="t" style="right:385.4000000000001px;top:927.25px;font-size:14px;line-height:14px;font-weight:400;color:#8f8f8f;">Short</div><div class="t" style="left:33.4px;top:977.15px;font-size:14px;line-height:14px;font-weight:400;color:#dbdbdb;">Initial capital</div><div class="t" style="right:1097.5px;top:975.85px;font-size:14px;line-height:14px;font-weight:400;color:#dbdbdb;">100,000.00<span style="font-size:10px;margin-left:3px">USD</span></div><div class="t" style="left:33.4px;top:1034.15px;font-size:14px;line-height:14px;font-weight:400;color:#dbdbdb;">Open P&amp;L</div><div class="t" style="right:1097.5px;top:1023.15px;font-size:14px;line-height:14px;font-weight:400;color:#dbdbdb;">0<span style="font-size:10px;margin-left:3px">USD</span></div>
<div style="position:absolute;left:1741px;top:407px;width:61px;height:17px;border-radius:2px;background:#f23645"></div><div style="position:absolute;left:1741px;top:454px;width:61px;height:17px;border-radius:2px;background:#5b9cf6"></div><div class="t" style="right:18.5px;top:409.04px;font-size:12px;line-height:12px;font-weight:400;color:#ffffff;">−28.48%</div><div class="t" style="right:18.5px;top:456.04px;font-size:12px;line-height:12px;font-weight:400;color:#ffffff;">−37.67%</div>
<div style="position:absolute;left:1564px;top:41px;width:243px;height:286px;border-radius:9px;background:#1e1e1e"></div><div style="position:absolute;left:1570px;top:47px;width:231px;height:32px;border-radius:6px;background:#f2f2f2"></div><div style="position:absolute;left:1570px;top:85px;width:231px;height:1px;background:#3a3a3a"></div><div style="position:absolute;left:1570px;top:282px;width:231px;height:1px;background:#3a3a3a"></div>
<svg width="1815" height="1041" viewBox="0 0 1815 1041"><rect x="1579.5" y="297.5" width="17" height="15" rx="3" fill="none" stroke="#dbdbdb" stroke-width="1"/><line x1="1579.5" y1="301.5" x2="1596.5" y2="301.5" stroke="#dbdbdb" stroke-width="1"/><line x1="1583.5" y1="295" x2="1583.5" y2="299" stroke="#dbdbdb" stroke-width="1"/><line x1="1592.5" y1="295" x2="1592.5" y2="299" stroke="#dbdbdb" stroke-width="1"/></svg>
<div class="t" style="left:1578.5px;top:55.85px;font-size:14px;line-height:14px;font-weight:400;color:#0f0f0f;">Range from chart</div><div class="t" style="left:1578.5px;top:98.89px;font-size:11px;line-height:11px;font-weight:400;color:#8c8c8c;letter-spacing:0.35px">OTHER RANGES</div><div class="t" style="left:1578.5px;top:125.15px;font-size:14px;line-height:14px;font-weight:400;color:#dbdbdb;">Last 7 days</div><div class="t" style="left:1578.5px;top:157.15px;font-size:14px;line-height:14px;font-weight:400;color:#dbdbdb;">Last 30 days</div><div class="t" style="left:1578.5px;top:189.15px;font-size:14px;line-height:14px;font-weight:400;color:#dbdbdb;">Last 90 days</div><div class="t" style="left:1578.5px;top:221.15px;font-size:14px;line-height:14px;font-weight:400;color:#dbdbdb;">Last 365 days</div><div class="t" style="left:1578.5px;top:253.15px;font-size:14px;line-height:14px;font-weight:400;color:#dbdbdb;">Entire history</div><div class="t" style="left:1606.5px;top:298.15px;font-size:14px;line-height:14px;font-weight:400;color:#dbdbdb;">Custom date range…</div>
</body></html>
